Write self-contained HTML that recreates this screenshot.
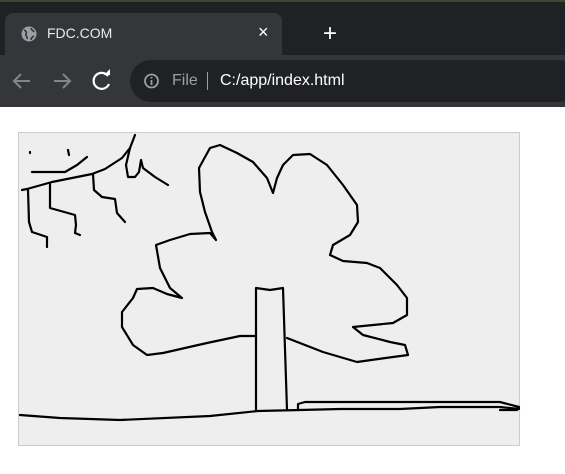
<!DOCTYPE html><html><head><style>
body{margin:0;width:565px;height:474px;background:#fff;position:relative;overflow:hidden;font-family:"Liberation Sans",sans-serif}
.tabbar{position:absolute;left:0;top:0;width:565px;height:55px;background:#202124}
.tab{position:absolute;left:5px;top:13px;width:277px;height:42px;background:#35363a;border-radius:8px 8px 0 0}
.toolbar{position:absolute;left:0;top:55px;width:565px;height:52px;background:#35363a}
.omni{position:absolute;left:130px;top:5px;width:450px;height:42px;background:#202124;border-radius:21px}
.t{position:absolute;color:#fff;font-size:14px}
.canvas{position:absolute;left:18px;top:132px;width:500px;height:312px;background:#eee;border:1px solid #ccc}
</style></head><body>
<div class="tabbar"></div>
<div style="position:absolute;left:0;top:0;width:565px;height:2px;background:#3a4a2a"></div>
<div class="tab"></div>
<svg style="position:absolute;left:20px;top:25px" width="18" height="18" viewBox="0 0 18 18"><circle cx="9" cy="9" r="7.5" fill="#9aa0a6"/><path d="M4 5c2 1 3 2 2 4s2 2 1 5M11 3c0 2 2 2 3 4M11 15c0-2 1-3 3-4" stroke="#35363a" stroke-width="1.6" fill="none"/></svg>
<div class="t" style="left:47px;top:25px;font-size:14px;color:#e8eaed">FDC.COM</div>
<div class="t" style="left:258px;top:22px;font-size:18px">×</div>
<div class="t" style="left:323px;top:20px;font-size:24px">+</div>
<div class="toolbar"><div class="omni"></div></div>
<svg style="position:absolute;left:0;top:55px" width="130" height="52"><g stroke="#80868b" stroke-width="2" fill="none"><path d="M30 26H14M21 19l-7 7 7 7"/><path d="M54 26h16M63 19l7 7-7 7"/></g><path d="M108 21a8 8 0 1 0 1 8" stroke="#fff" stroke-width="2.2" fill="none"/><path d="M104 20h6v-6z" fill="#fff"/></svg>
<svg style="position:absolute;left:143px;top:72px" width="18" height="18"><circle cx="8.5" cy="9" r="6.5" stroke="#9aa0a6" stroke-width="1.8" fill="none"/><path d="M8.5 8v5M8.5 5v1.5" stroke="#9aa0a6" stroke-width="1.8"/></svg>
<div class="t" style="left:172px;top:72px;font-size:16px;color:#9aa0a6">File</div>
<div style="position:absolute;left:207px;top:72px;width:1px;height:18px;background:#9aa0a6"></div>
<div class="t" style="left:220px;top:72px;font-size:16px">C:/app/index.html</div>
<div class="canvas"></div>
<svg style="position:absolute;left:0;top:0" width="565" height="474"><g stroke="#000" stroke-width="2.2" fill="none" stroke-linejoin="round" stroke-linecap="round">
<path d="M22 190L27 189 52 182 92 174 105 169 122 158 130 148 135 135"/>
<path d="M130 148L126 165 128 177 135 177 139 172 141 160 143 168 155 177 168 185"/>
<path d="M28 190L29 222 32 232 47 237 47 247"/>
<path d="M50 183L50 208 75 215 76 225 75 233 80 235"/>
<path d="M93 174L94 190 102 197 115 199 117 213 125 222"/>
<path d="M32 172L65 172 77 165 87 157"/>
<path d="M30 152v1M68 150l1 5"/>
<path d="M256 410V288L270 290 283 288 287 410"/>
<path d="M256 336L240 336 207 343 163 353 147 355 133 345 122 327 122 312 133 298 137 289 153 288 167 294 182 298 170 288 160 268 156 245 170 240 190 234 210 233 216 240 212 232 205 212 200 192 199 168 210 148 220 145 237 153 253 162 267 178 273 193 277 178 283 165 293 155 310 154 327 165 343 185 357 205 358 222 350 235 333 245 330 255 343 261 367 263 380 268 397 285 407 298 407 315 393 323 353 327 363 335 390 342 405 345 408 355 393 357 357 362 323 352 287 338"/>
<path d="M20 415L60 418 120 420 210 416 258 411 300 410 340 409 400 409 440 407 500 407 519 409"/>
<path d="M298 410V404L305 402 500 402 519 407 517 410 500 410"/>
</g></svg>
</body></html>
